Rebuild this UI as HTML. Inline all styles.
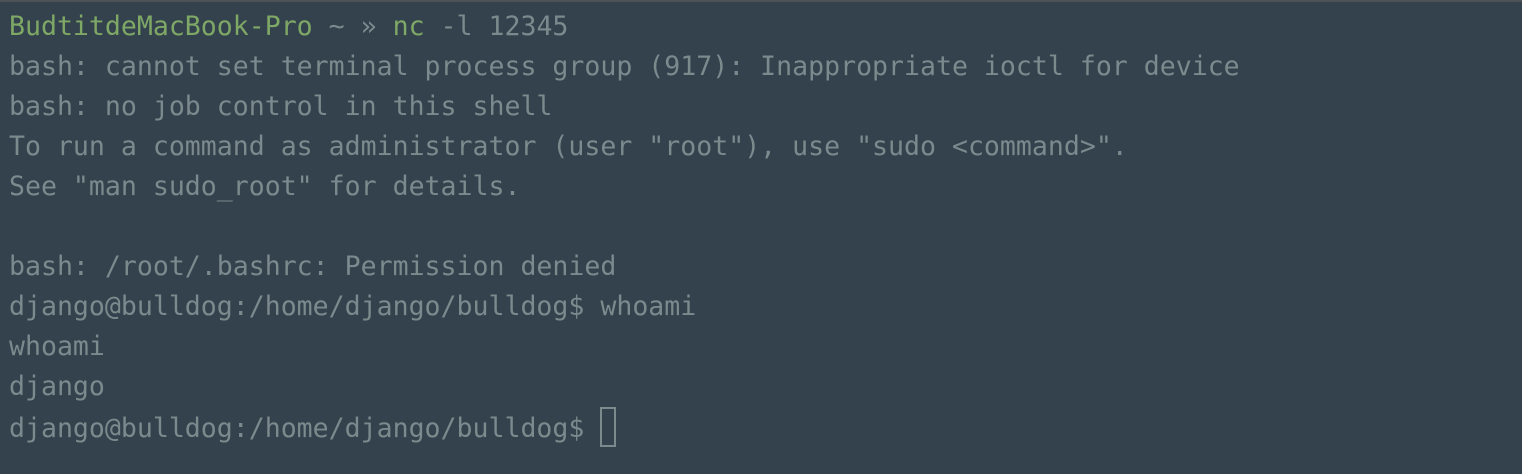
<!DOCTYPE html><html><head><style>
html,body{margin:0;padding:0}
body{width:1522px;height:474px;background:#33424d;overflow:hidden;position:relative;border-top:2px solid #4d5256;box-sizing:border-box}
pre{margin:0;position:absolute;left:9px;top:5px;font-family:"DejaVu Sans Mono","Liberation Mono",monospace;font-size:26.55px;line-height:40px;color:#7b8a8d}
.g{color:#7fa866}
.c{display:inline-block;width:12px;height:36px;border:2px solid #7b8a8d;vertical-align:-10px;margin-left:0}
</style></head><body><pre><span class="g">BudtitdeMacBook-Pro</span> ~ » <span class="g">nc</span> -l 12345
bash: cannot set terminal process group (917): Inappropriate ioctl for device
bash: no job control in this shell
To run a command as administrator (user "root"), use "sudo &lt;command&gt;".
See "man sudo_root" for details.

bash: /root/.bashrc: Permission denied
django@bulldog:/home/django/bulldog$ whoami
whoami
django
django@bulldog:/home/django/bulldog$ <span class="c"></span></pre></body></html>
